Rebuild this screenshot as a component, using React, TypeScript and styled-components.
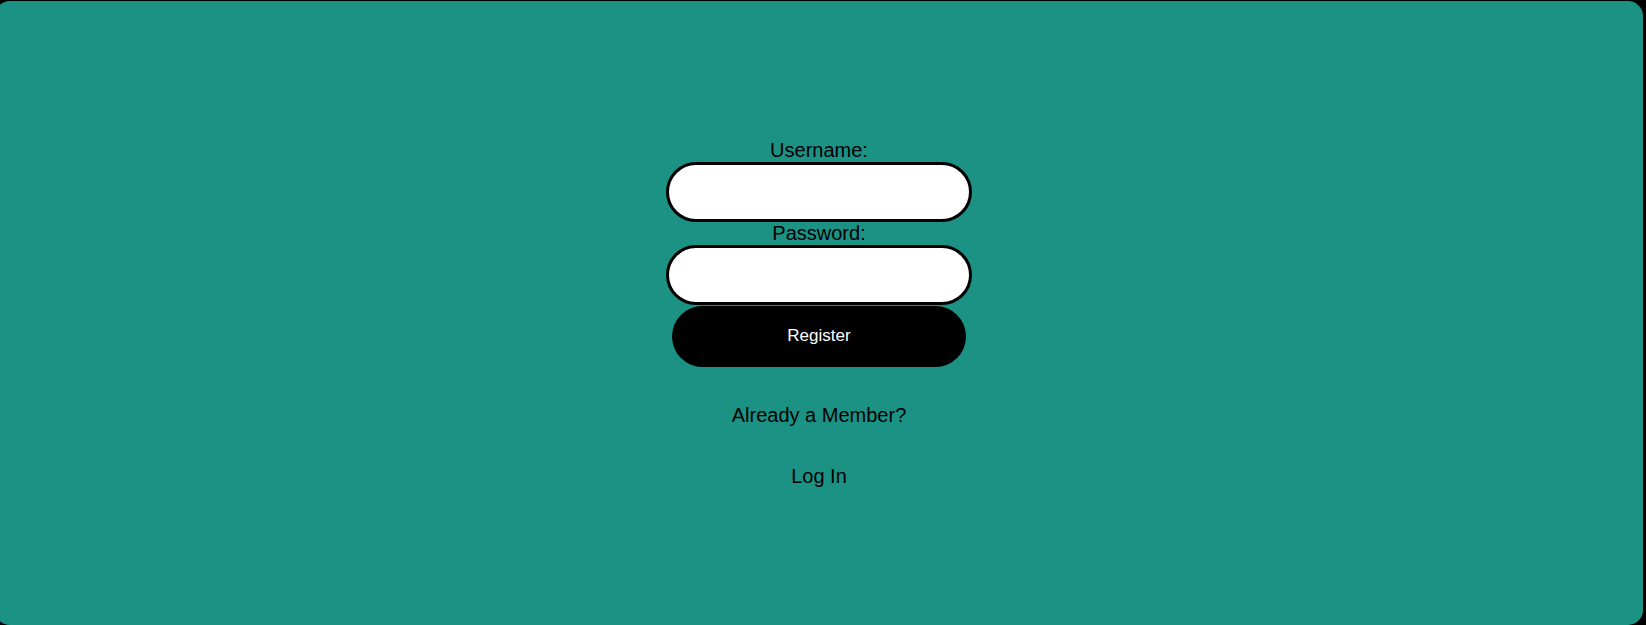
import React from "react";
import styled, { createGlobalStyle } from "styled-components";

const Global = createGlobalStyle`
  html, body {
    margin: 0;
    padding: 0;
    background: #000;
    overflow: hidden;
  }
  body {
    font-family: "Liberation Sans", Arial, sans-serif;
  }
`;

const Page = styled.div`
  display: flex;
  height: 625px;
  padding: 1px 3px 0 0;
  box-sizing: border-box;
`;

const Panel = styled.main`
  flex: 1;
  margin-left: -5px;
  height: 624px;
  background: #1c9285;
  border-radius: 15px;
  display: flex;
  flex-direction: column;
  align-items: center;
  justify-content: center;
`;

const Form = styled.form`
  display: flex;
  flex-direction: column;
  align-items: center;
`;

const Label = styled.label`
  font-size: 20px;
  line-height: 23px;
  color: #000;
`;

const Input = styled.input`
  box-sizing: border-box;
  width: 306px;
  height: 60px;
  border: 3px solid #000;
  border-radius: 30px;
  background: #fff;
  padding: 0 20px;
  font-size: 18px;
  font-family: inherit;
  outline: none;
`;

const Button = styled.button`
  box-sizing: border-box;
  width: 294px;
  height: 61px;
  margin-top: 1px;
  padding: 0 0 1px;
  border: none;
  border-radius: 31px;
  background: #000;
  color: #fff;
  font-family: "Liberation Sans", Arial, sans-serif;
  font-size: 17px;
  cursor: pointer;
`;

const Text = styled.p<{ $gap: number }>`
  margin: ${(p) => p.$gap}px 0 0;
  font-size: 20px;
  line-height: 23px;
  color: #000;
`;

const LinkText = styled(Text)`
  cursor: pointer;
`;

export default function App() {
  return (
    <>
      <Global />
      <Page>
        <Panel>
          <Form onSubmit={(e) => e.preventDefault()}>
            <Label htmlFor="username">Username:</Label>
            <Input id="username" type="text" />
            <Label htmlFor="password">Password:</Label>
            <Input id="password" type="password" />
            <Button type="submit">Register</Button>
          </Form>
          <Text $gap={37}>Already a Member?</Text>
          <LinkText $gap={38}>Log In</LinkText>
        </Panel>
      </Page>
    </>
  );
}
